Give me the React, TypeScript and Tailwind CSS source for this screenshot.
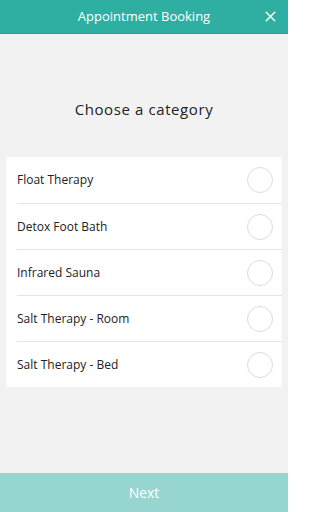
import { X } from 'lucide-react';

const categories = [
  'Float Therapy',
  'Detox Foot Bath',
  'Infrared Sauna',
  'Salt Therapy - Room',
  'Salt Therapy - Bed',
];

export default function App() {
  return (
    <div className="flex h-[512px] w-[288px] flex-col bg-[#f2f2f2] font-['Open_Sans',sans-serif]">
      {/* Header */}
      <div className="relative flex h-[34px] shrink-0 items-center justify-center border-b border-[#2a9f93] bg-[#2fafa2]">
        <span className="text-[13px] text-white">Appointment Booking</span>
        <button className="absolute right-[9px] top-[8px] text-white">
          <X size={17} strokeWidth={2} />
        </button>
      </div>

      {/* Title */}
      <div className="flex h-[123px] shrink-0 items-center justify-center pt-[27px]">
        <h1 className="text-[15px] tracking-[0.6px] text-[#222]">Choose a category</h1>
      </div>

      {/* Category list */}
      <div className="mx-[6px] bg-white">
        {categories.map((name, i) => (
          <div key={name} className="flex h-[46px] items-center pl-[11px]">
            <div
              className={`flex h-full flex-1 items-center justify-between pr-[9px] ${
                i > 0 ? 'border-t border-[#e4e4e4]' : ''
              }`}
            >
              <span className="text-[12px] text-[#222]">{name}</span>
              <span className="h-[26px] w-[26px] rounded-full border border-[#dcdcdc]" />
            </div>
          </div>
        ))}
      </div>

      <div className="flex-1" />

      {/* Footer */}
      <button className="flex h-[39px] shrink-0 items-center justify-center bg-[#97d6d0] text-[14px] text-white">
        Next
      </button>
    </div>
  );
}
